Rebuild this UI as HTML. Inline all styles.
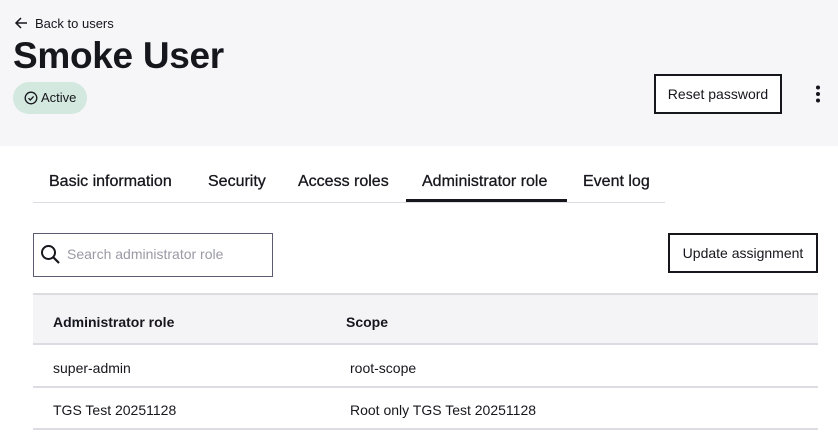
<!DOCTYPE html>
<html><head><style>
body{margin:0;width:838px;height:441px;overflow:hidden;background:#fff;font-family:"Liberation Sans",sans-serif;color:#16161d;position:relative}
.hdr{position:absolute;left:0;top:0;width:838px;height:146px;background:#f6f6f9}
.abs{position:absolute;white-space:nowrap}
.tab{font-size:16px;-webkit-text-stroke:0.3px #16161d}
</style></head><body>
<div class="hdr"></div>
<svg class="abs" style="left:14px;top:16px" width="14" height="14" viewBox="0 0 14 14"><path d="M13 7H2M7 2L2 7l5 5" stroke="#16161d" stroke-width="1.5" fill="none"/></svg>
<div class="abs" style="left:35px;top:16px;font-size:13px">Back to users</div>
<div class="abs" style="left:13px;top:35px;font-size:37px;font-weight:bold;letter-spacing:-0.3px">Smoke User</div>
<div class="abs" style="left:13px;top:82px;width:74px;height:32px;border-radius:16px;background:#d3e8de"></div>
<svg class="abs" style="left:24px;top:91px" width="14" height="14" viewBox="0 0 14 14"><circle cx="7" cy="7" r="5.8" stroke="#16161d" stroke-width="1.3" fill="none"/><path d="M4.5 7.2l1.8 1.8 3.3-3.6" stroke="#16161d" stroke-width="1.3" fill="none"/></svg>
<div class="abs" style="left:41px;top:90px;font-size:13px">Active</div>
<div class="abs" style="left:654px;top:74px;width:128px;height:40px;border:2px solid #16161d;box-sizing:border-box;background:#fff;font-size:14px;display:flex;align-items:center;justify-content:center">Reset password</div>
<svg class="abs" style="left:814px;top:85px" width="8" height="18"><circle cx="4" cy="2.5" r="2" fill="#16161d"/><circle cx="4" cy="9" r="2" fill="#16161d"/><circle cx="4" cy="15.5" r="2" fill="#16161d"/></svg>

<div class="abs" style="left:33px;top:202px;width:632px;height:1px;background:#dcdce2"></div>
<div class="abs tab" style="left:49px;top:173px">Basic information</div>
<div class="abs tab" style="left:208px;top:173px">Security</div>
<div class="abs tab" style="left:298px;top:173px">Access roles</div>
<div class="abs tab" style="left:422px;top:173px">Administrator role</div>
<div class="abs tab" style="left:583px;top:173px">Event log</div>
<div class="abs" style="left:406px;top:199px;width:161px;height:3px;background:#16161d"></div>

<div class="abs" style="left:33px;top:233px;width:240px;height:44px;border:1px solid #5a5a70;box-sizing:border-box"></div>
<svg class="abs" style="left:40px;top:244px" width="22" height="22" viewBox="0 0 22 22"><circle cx="8.5" cy="8.5" r="6.5" stroke="#16161d" stroke-width="2" fill="none"/><path d="M13.5 13.5L19 19" stroke="#16161d" stroke-width="2.2"/></svg>
<div class="abs" style="left:67px;top:246px;font-size:14px;color:#9a9aa6">Search administrator role</div>
<div class="abs" style="left:668px;top:233px;width:150px;height:40px;border:2px solid #16161d;box-sizing:border-box;font-size:14px;display:flex;align-items:center;justify-content:center">Update assignment</div>

<div class="abs" style="left:33px;top:293px;width:785px;height:52px;background:#f4f4f7;border-top:2px solid #dcdce2;border-bottom:2px solid #dcdce2;box-sizing:border-box"></div>
<div class="abs" style="left:53px;top:314px;font-size:14px;font-weight:bold">Administrator role</div>
<div class="abs" style="left:346px;top:314px;font-size:14px;font-weight:bold">Scope</div>
<div class="abs" style="left:53px;top:360px;font-size:14px">super-admin</div>
<div class="abs" style="left:350px;top:360px;font-size:14px">root-scope</div>
<div class="abs" style="left:33px;top:386px;width:785px;height:2px;background:#dcdce2"></div>
<div class="abs" style="left:53px;top:402px;font-size:14px">TGS Test 20251128</div>
<div class="abs" style="left:350px;top:402px;font-size:14px">Root only TGS Test 20251128</div>
<div class="abs" style="left:33px;top:428px;width:785px;height:2px;background:#dcdce2"></div>
</body></html>
